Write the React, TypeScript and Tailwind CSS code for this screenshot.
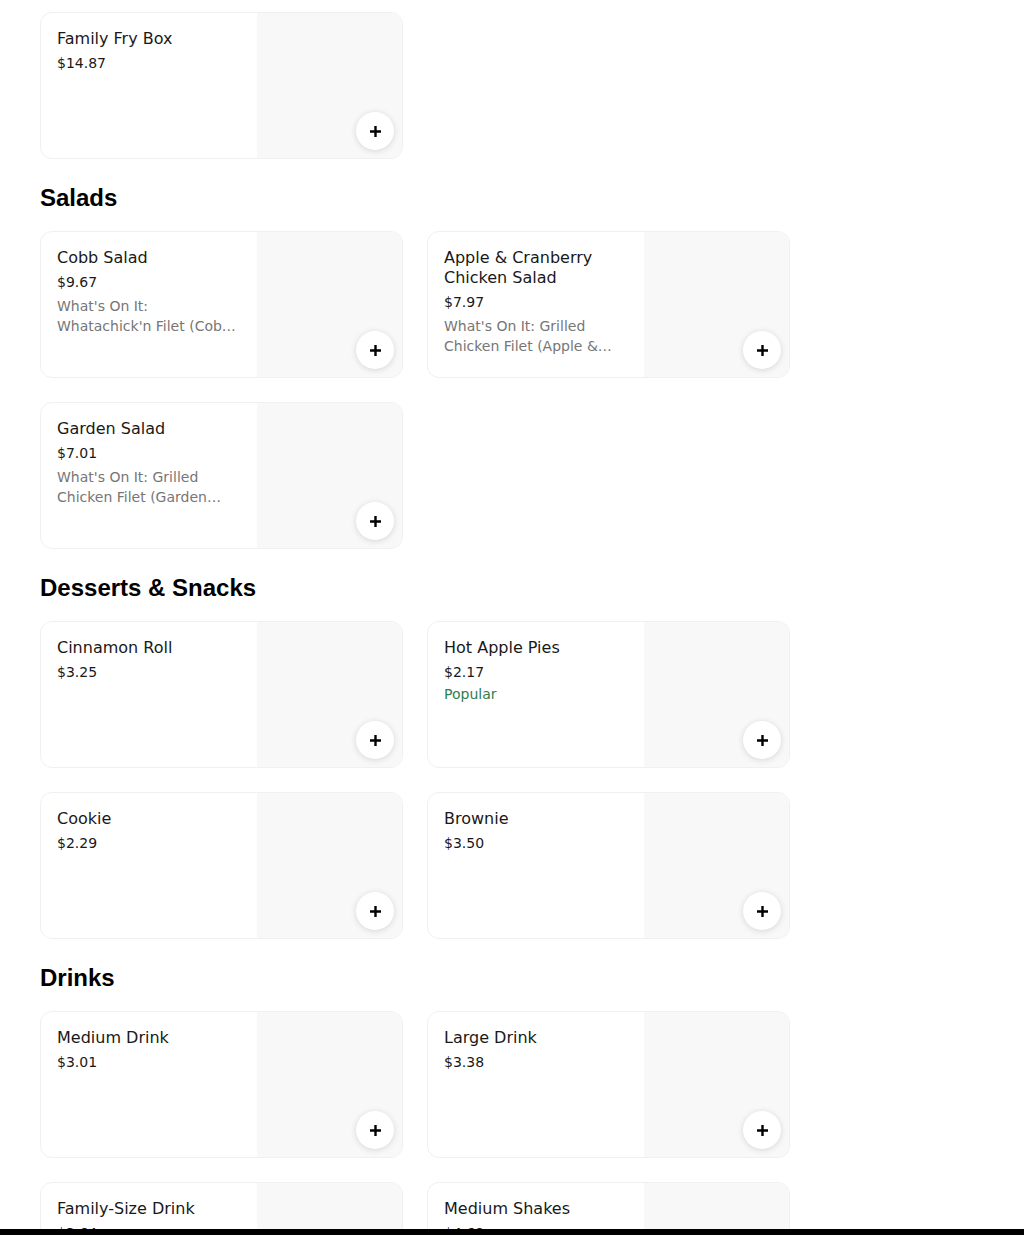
// Menu listing: category headings with two-column item cards

type Item = {
  name: string
  price: string
  desc?: string
  popular?: boolean
}

type Section = {
  title?: string
  items: Item[]
}

const SECTIONS: Section[] = [
  {
    items: [{ name: 'Family Fry Box', price: '$14.87' }],
  },
  {
    title: 'Salads',
    items: [
      { name: 'Cobb Salad', price: '$9.67', desc: "What's On It: Whatachick'n Filet (Cobb Salad), Roasted Corn, Bacon, Shredded Cheese" },
      { name: 'Apple & Cranberry Chicken Salad', price: '$7.97', desc: "What's On It: Grilled Chicken Filet (Apple & Cranberry), Spring Mix, Apples" },
      { name: 'Garden Salad', price: '$7.01', desc: "What's On It: Grilled Chicken Filet (Garden Salad), Romaine, Tomatoes" },
    ],
  },
  {
    title: 'Desserts & Snacks',
    items: [
      { name: 'Cinnamon Roll', price: '$3.25' },
      { name: 'Hot Apple Pies', price: '$2.17', popular: true },
      { name: 'Cookie', price: '$2.29' },
      { name: 'Brownie', price: '$3.50' },
    ],
  },
  {
    title: 'Drinks',
    items: [
      { name: 'Medium Drink', price: '$3.01' },
      { name: 'Large Drink', price: '$3.38' },
      { name: 'Family-Size Drink', price: '$3.64' },
      { name: 'Medium Shakes', price: '$4.69' },
    ],
  },
]

function PlusIcon() {
  return (
    <svg width="13" height="13" viewBox="0 0 13 13" fill="none">
      <path d="M6.5 1v11M1 6.5h11" stroke="#000" strokeWidth="2.4" />
    </svg>
  )
}

function MenuCard({ item }: { item: Item }) {
  return (
    <div className="flex h-[147px] overflow-hidden rounded-xl border border-[#f0f0f0] bg-white">
      <div className="min-w-0 flex-1 px-4 pt-4" style={{ fontFamily: '"DejaVu Sans", sans-serif' }}>
        <div className="text-base leading-5 text-[#191919]">{item.name}</div>
        <div className="mt-1 text-sm leading-5 text-[#191919]">{item.price}</div>
        {item.desc && (
          <div className="mt-1 line-clamp-2 text-sm leading-5 text-[#767676]">{item.desc}</div>
        )}
        {item.popular && <div className="mt-[2px] text-sm leading-5 text-[#2f7d4f]">Popular</div>}
      </div>
      <div className="relative w-[145px] shrink-0 bg-[#f8f8f8]">
        <button className="absolute bottom-2 right-[8px] flex h-[38px] w-[38px] items-center justify-center rounded-full bg-white shadow-[0_1px_6px_rgba(0,0,0,0.14)]">
          <PlusIcon />
        </button>
      </div>
    </div>
  )
}

export default function App() {
  return (
    <div className="min-h-screen bg-white">
      <div className="w-[790px] pl-10 pt-3 pb-10">
        {SECTIONS.map((s, i) => (
          <section key={i}>
            {s.title && (
              <h2
                className="mt-[23px] mb-[17px] text-2xl leading-8 font-bold text-black"
                style={{ fontFamily: '"Liberation Sans", Arial, sans-serif' }}
              >
                {s.title}
              </h2>
            )}
            <div className="grid grid-cols-2 gap-6">
              {s.items.map(item => (
                <MenuCard key={item.name} item={item} />
              ))}
            </div>
          </section>
        ))}
      </div>
      {/* bottom bar peeking in */}
      <div className="fixed inset-x-0 bottom-0 h-[6px] bg-black" />
    </div>
  )
}
